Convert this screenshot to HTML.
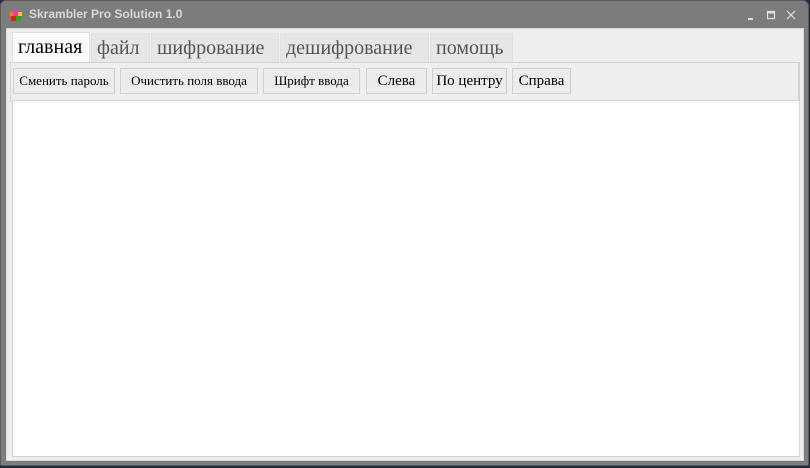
<!DOCTYPE html>
<html><head><meta charset="utf-8"><style>
*{margin:0;padding:0;box-sizing:border-box}
body{width:810px;height:468px;background:#1e2a40;position:relative;overflow:hidden;font-family:"Liberation Serif",serif}
.win{position:absolute;left:0;top:0;width:809px;height:466px;background:#7c7c7c;border-radius:6px 6px 2px 2px;border:1px solid #5a5a5a}
.title{position:absolute;left:28px;top:6px;font:bold 12px "Liberation Sans",sans-serif;color:#d8d8d8}
.client{position:absolute;left:5px;top:27px;width:798px;height:433px;background:#eeeeee;border:1px solid #d8d8d8}
.tab{position:absolute;top:4px;height:30px;font-size:20px;color:#555;background:#e6e6e6;border:1px solid #e0e0e0;padding:2px 5px 0;line-height:24px}
.tab.a{background:#fcfcfc;color:#000;top:3px;height:31px}
.bar{position:absolute;left:3px;top:33px;width:790px;height:40px;border:1px solid #d4d4d4;border-right:2px solid #d0d0d0}
.btn{position:absolute;top:5px;height:26px;border:1px solid #d0d0d0;background:#ececec;font-size:13px;color:#000;text-align:center;line-height:24px}
.area{position:absolute;left:5px;top:71px;width:788px;height:357px;background:#fff;border:1px solid #d4d4d4}
</style></head><body>
<div class="win">
<svg style="position:absolute;left:8px;top:7px" width="15" height="14"><rect x="2" y="8" width="5" height="5" fill="#d22"/><rect x="7" y="8" width="5" height="5" fill="#2a2"/><rect x="4" y="2" width="5" height="6" fill="#f3a"/><rect x="9" y="4" width="4" height="4" fill="#fc2"/><rect x="1" y="4" width="3" height="4" fill="#e80"/></svg>
<div class="title">Skrambler Pro Solution 1.0</div>
<svg style="position:absolute;left:744px;top:8px" width="56" height="12" stroke="#ddd" fill="none" stroke-width="1.2"><line x1="3" y1="10" x2="8" y2="10" stroke-width="2"/><rect x="22.5" y="2.5" width="7" height="7"/><line x1="22.5" y1="3.5" x2="29.5" y2="3.5" stroke-width="2"/><path d="M42 2L50 10M50 2L42 10"/></svg>
<div class="client">
<div class="tab a" style="left:5px;width:78px">главная</div>
<div class="tab" style="left:84px;width:59px">файл</div>
<div class="tab" style="left:144px;width:128px">шифрование</div>
<div class="tab" style="left:273px;width:149px">дешифрование</div>
<div class="tab" style="left:423px;width:83px">помощь</div>
<div class="bar">
<div class="btn" style="left:2px;width:102px">Сменить пароль</div>
<div class="btn" style="left:109px;width:138px">Очистить поля ввода</div>
<div class="btn" style="left:252px;width:97px">Шрифт ввода</div>
<div class="btn" style="left:355px;width:61px;font-size:15px">Слева</div>
<div class="btn" style="left:421px;width:75px;font-size:15px">По центру</div>
<div class="btn" style="left:501px;width:59px;font-size:15px">Справа</div>
</div>
<div class="area"></div>
</div>
</div>
</body></html>
